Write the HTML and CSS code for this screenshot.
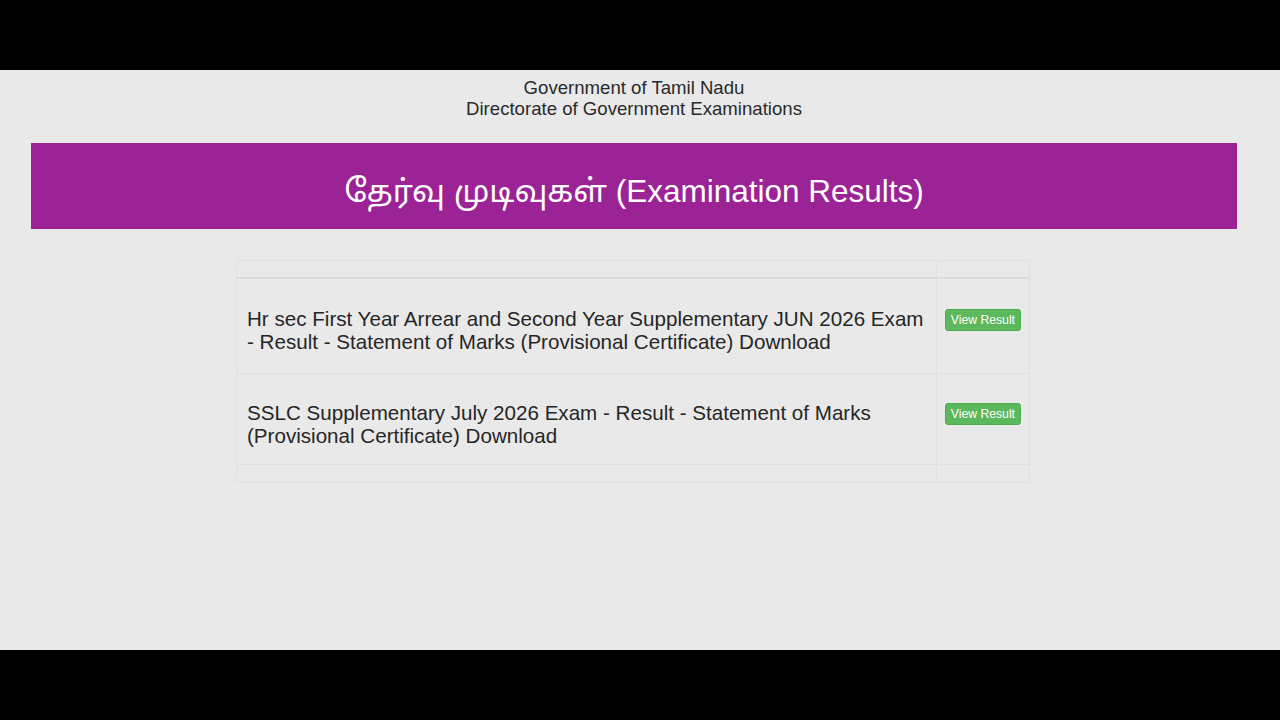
FILE: index.html
```html
<!DOCTYPE html>
<html>
<head>
<meta charset="utf-8">
<link rel="stylesheet" href="styles.css">
</head>
<body>
<div class="bar"></div>
<div class="page">
  <div class="gov">
    <div>Government of Tamil Nadu</div>
    <div>Directorate of Government Examinations</div>
  </div>
  <div class="banner">தேர்வு முடிவுகள் (Examination Results)</div>
  <table class="results">
    <thead>
      <tr><th class="c1"></th><th class="c2"></th></tr>
    </thead>
    <tbody>
      <tr class="r1">
        <td class="c1"><div class="title">Hr sec First Year Arrear and Second Year Supplementary JUN 2026 Exam - Result - Statement of Marks (Provisional Certificate) Download</div></td>
        <td class="c2"><span class="btn">View Result</span></td>
      </tr>
      <tr class="r2">
        <td class="c1"><div class="title">SSLC Supplementary July 2026 Exam - Result - Statement of Marks (Provisional Certificate) Download</div></td>
        <td class="c2"><span class="btn">View Result</span></td>
      </tr>
      <tr class="empty"><td class="c1"></td><td class="c2"></td></tr>
    </tbody>
  </table>
</div>
<div class="bar"></div>
</body>
</html>
```
FILE: styles.css
```css
html, body {
  margin: 0;
  padding: 0;
  background: #000;
}
body {
  font-family: "Liberation Sans", Arial, "Noto Sans Tamil", "Noto Sans", sans-serif;
  color: #333;
}
.bar {
  height: 70px;
  background: #000;
}
.page {
  height: 580px;
  background: #e9e9e9;
  overflow: hidden;
}
.gov {
  text-align: center;
  font-size: 18.6px;
  line-height: 21px;
  color: #2a2a2a;
  padding-top: 7px;
  padding-right: 12px;
}
.banner {
  margin: 24px 43px 0 31px;
  height: 86px;
  background: #9b2395;
  color: #fff;
  font-size: 31.5px;
  display: flex;
  align-items: center;
  justify-content: center;
  padding-top: 14px;
  box-sizing: border-box;
}
.results {
  margin: 31px 0 0 236px;
  width: 794px;
  border-collapse: collapse;
  border: 1px solid #e2e2e2;
}
.results th, .results td {
  padding: 8px;
  border: 1px solid #e0e0e0;
  vertical-align: top;
  text-align: left;
}
.results th {
  height: 0;
  border-bottom: 2px solid #dcdcdc;
}
.results .c1 { width: 686px; padding-left: 10px; }
.results .c2 { width: 75px; }
.title {
  font-size: 20.6px;
  line-height: 23px;
  color: #262626;
}
.r1 .title { margin: 20px 0 12px; }
.r2 .title { margin: 19px 0 9px; }
.btn {
  display: inline-block;
  white-space: nowrap;
  margin-top: 22px;
  background: #5cb85c;
  border: 1px solid #4cae4c;
  color: #fff;
  font-size: 12.2px;
  line-height: 18px;
  padding: 1px 5px;
  border-radius: 3px;
}
.r2 .btn { margin-top: 21px; }
.results .empty td { height: 0; padding-top: 8px; padding-bottom: 9px; }
```
